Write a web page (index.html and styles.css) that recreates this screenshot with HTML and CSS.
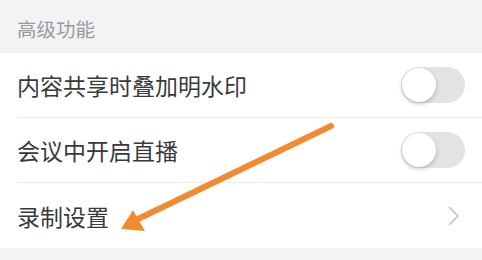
FILE: index.html
```html
<!DOCTYPE html>
<html lang="zh-CN">
<head>
  <meta charset="UTF-8">
  <title>高级功能</title>
  <link rel="stylesheet" href="styles.css">
</head>
<body>

<div class="section-title">高级功能</div>

<div class="settings-list">
  <div class="row">
    <span class="row-label">内容共享时叠加明水印</span>
    <span class="switch"><span class="knob"></span></span>
  </div>
  <div class="row">
    <span class="row-label">会议中开启直播</span>
    <span class="switch"><span class="knob"></span></span>
  </div>
  <div class="row last">
    <span class="row-label">录制设置</span>
    <svg class="chevron" width="14" height="22" viewBox="0 0 14 22">
      <path d="M2 2 L11 11 L2 20" fill="none" stroke="#c4c4c8" stroke-width="1.6"/>
    </svg>
  </div>
</div>

<!-- orange pointer drawn over the list -->
<svg class="pointer" width="482" height="260" viewBox="0 0 482 260">
  <line x1="331" y1="126" x2="138" y2="219" stroke="#f28b30" stroke-width="6" stroke-linecap="round"/>
  <polygon points="121,229 133,210 145,231" fill="#f28b30"/>
</svg>

</body>
</html>
```

FILE: styles.css
```css
body {
  margin: 0;
  width: 482px;
  height: 260px;
  background-color: #f3f3f6;
  font-family: "Noto Sans CJK SC", "Noto Sans", sans-serif;
  position: relative;
  overflow: hidden;
}

.section-title {
  height: 53px;
  box-sizing: border-box;
  padding: 16px 0 0 17px;
  font-size: 19.5px;
  line-height: 26px;
  color: #9a9a9e;
}

.settings-list {
  background-color: #ffffff;
}

.row {
  height: 65px;
  margin-left: 17px;
  padding-right: 17px;
  display: flex;
  align-items: center;
  justify-content: space-between;
  border-bottom: 1px solid #ececee;
  box-sizing: border-box;
}

.row.last {
  border-bottom: none;
  padding-right: 21px;
}

.row-label {
  font-size: 23px;
  color: #3a3a3c;
}

.switch {
  width: 64px;
  height: 36px;
  border-radius: 18px;
  background-color: #e3e3e5;
  display: flex;
  align-items: center;
  padding: 0 1px;
  box-sizing: border-box;
}

.knob {
  width: 34px;
  height: 34px;
  border-radius: 50%;
  background-color: #ffffff;
  box-shadow: 0 2px 4px rgba(0, 0, 0, 0.22);
}

.pointer {
  position: absolute;
  left: 0;
  top: 0;
}
```
